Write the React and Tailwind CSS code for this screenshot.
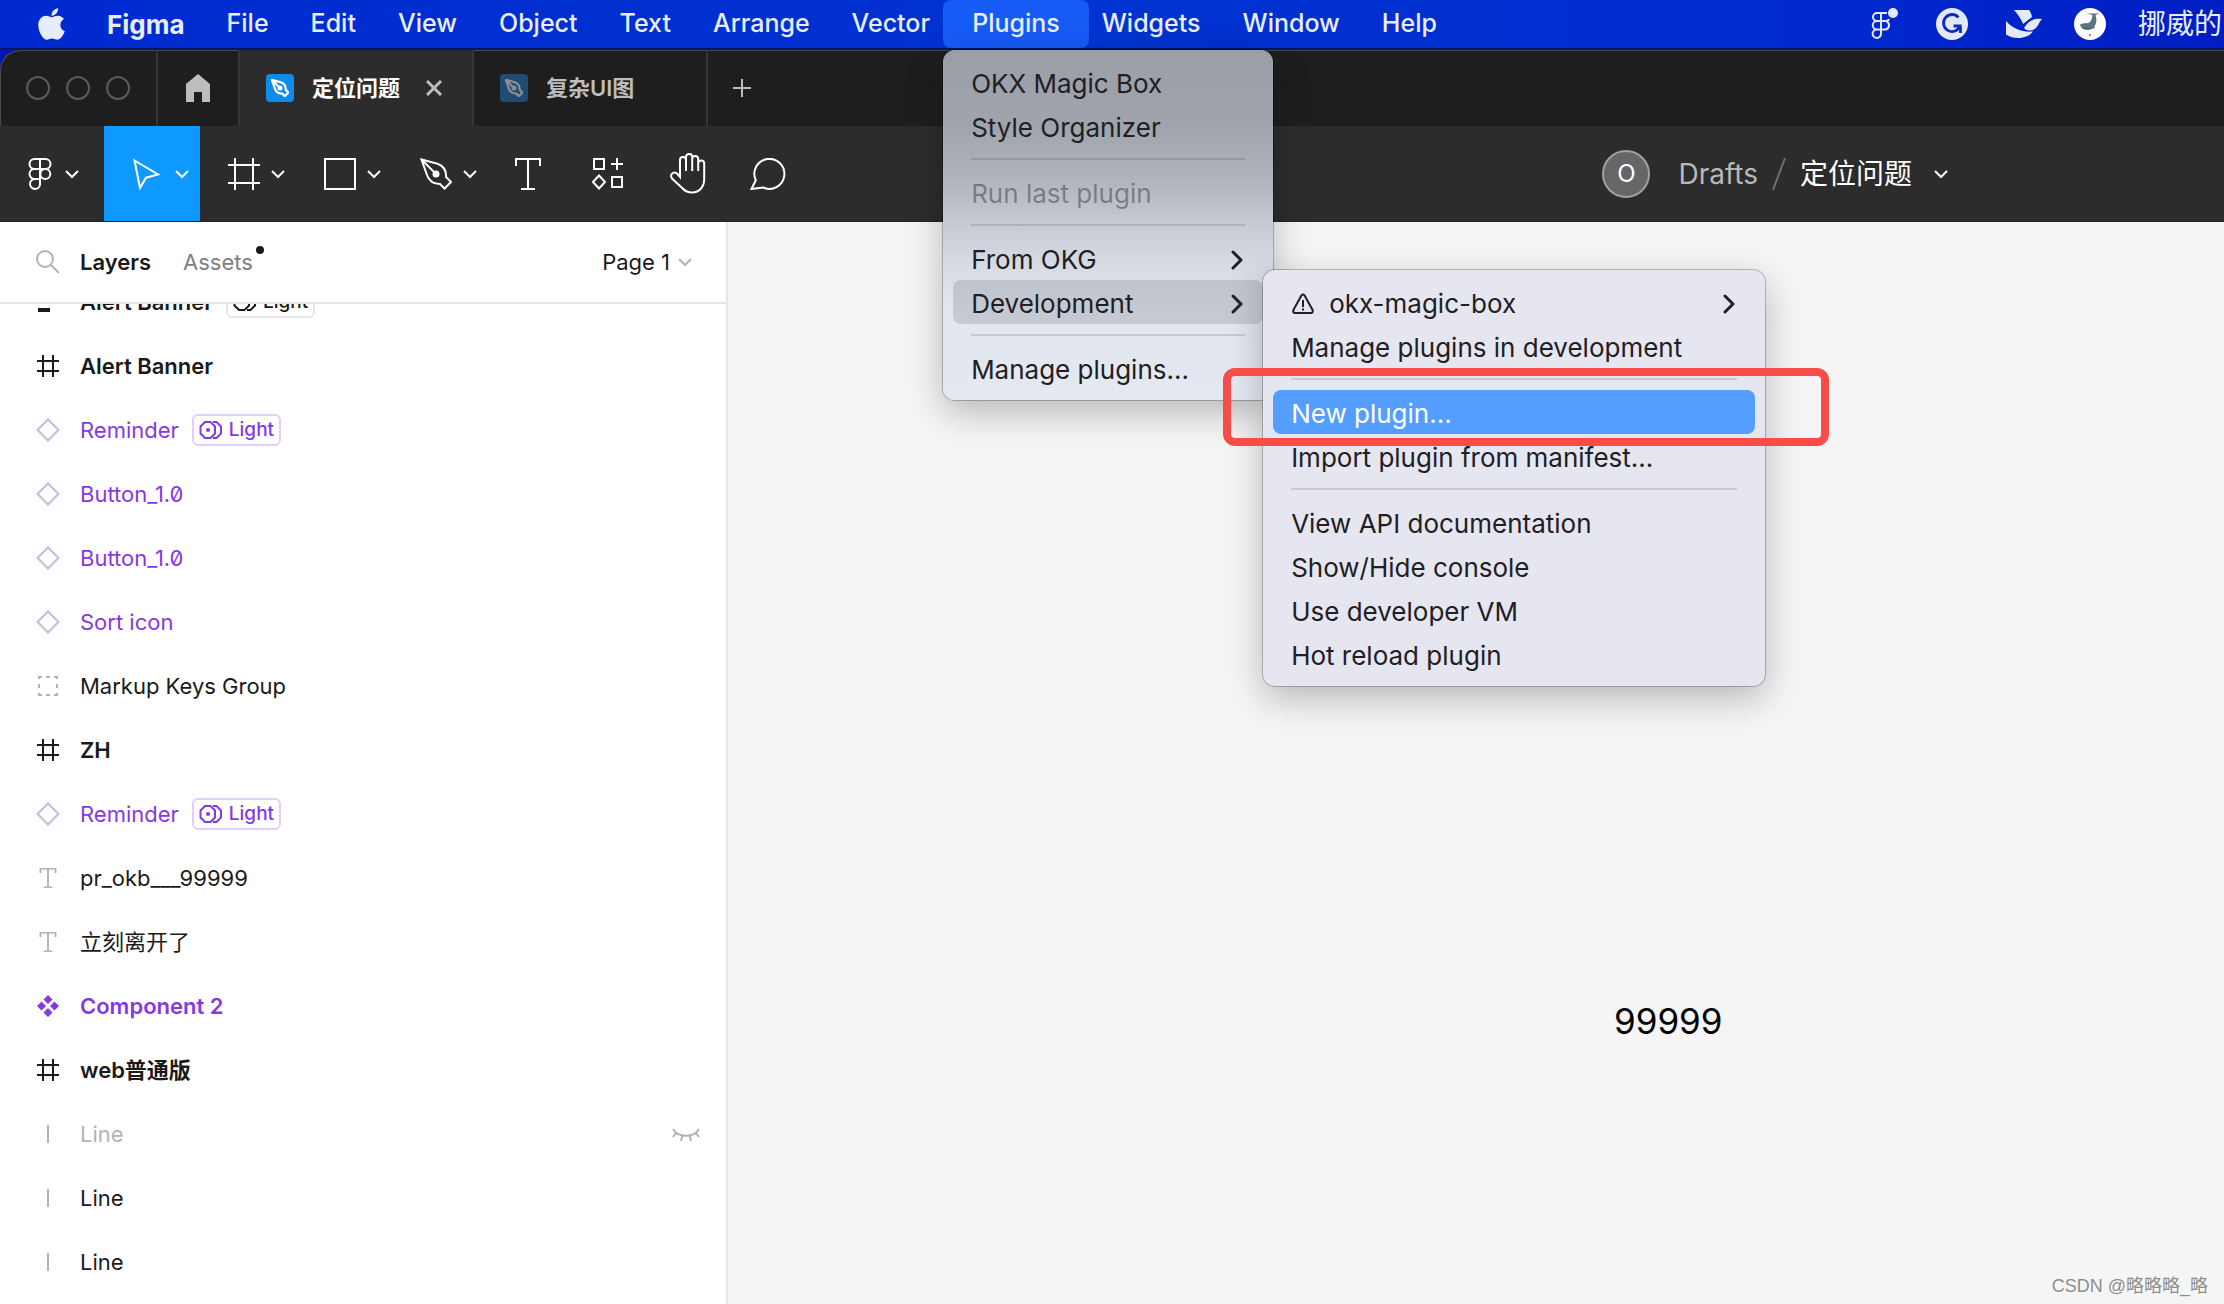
import { FaApple } from "react-icons/fa";

const menusBefore = [
  "File",
  "Edit",
  "View",
  "Object",
  "Text",
  "Arrange",
  "Vector",
];

const menusAfter = ["Widgets", "Window", "Help"];

const layers = [
  { icon: "scroll", name: "Alert Banner", bold: true, tag: "Light" },
  { icon: "frame", name: "Alert Banner", bold: true },
  { icon: "instance", name: "Reminder", purple: true, tag: "Light" },
  { icon: "instance", name: "Button_1.0", purple: true },
  { icon: "instance", name: "Button_1.0", purple: true },
  { icon: "instance", name: "Sort icon", purple: true },
  { icon: "group", name: "Markup Keys Group" },
  { icon: "frame", name: "ZH", bold: true },
  { icon: "instance", name: "Reminder", purple: true, tag: "Light" },
  { icon: "text", name: "pr_okb___99999" },
  { icon: "text", name: "立刻离开了" },
  { icon: "component", name: "Component 2", bold: true, purple: true },
  { icon: "frame", name: "web普通版", bold: true },
  { icon: "line", name: "Line", hidden: true },
  { icon: "line", name: "Line" },
  { icon: "line", name: "Line" },
];

/* ---------- icons ---------- */

function Chevron({ className = "text-white" }) {
  return (
    <svg
      viewBox="0 0 14 10"
      className={`w-[14px] h-[10px] shrink-0 ${className}`}
      fill="none"
      stroke="currentColor"
      strokeWidth="2"
    >
      <path d="M1 2l6 6 6-6" />
    </svg>
  );
}

function MenuChevron() {
  return (
    <svg
      viewBox="0 0 14 20"
      className="w-[14px] h-5 ml-auto"
      fill="none"
      stroke="currentColor"
      strokeWidth="3"
      strokeLinecap="round"
      strokeLinejoin="round"
    >
      <path d="M2 2l8 8-8 8" />
    </svg>
  );
}

function FigmaIcon() {
  return (
    <svg
      viewBox="0 0 24 32"
      className="w-6 h-8"
      fill="none"
      stroke="currentColor"
      strokeWidth="2"
    >
      <path d="M12 1H6.500a5 5 0 0 0 0 10H17.500a5 5 0 0 0 0-10H12v25.500a5 5 0 1 1-5.500-5.500H12" />
      <path d="M12 11H6.500a5 5 0 0 0 0 10" />
      <circle cx="17.300" cy="16" r="5" />
    </svg>
  );
}

function MoveIcon() {
  return (
    <svg
      viewBox="0 0 32 32"
      className="w-8 h-8"
      fill="none"
      stroke="currentColor"
      strokeWidth="2"
    >
      <path d="M2.500 2.500L26 16.500l-12 3.200L8 30z" />
    </svg>
  );
}

function FrameIcon() {
  return (
    <svg
      viewBox="0 0 32 32"
      className="w-8 h-8"
      fill="none"
      stroke="currentColor"
      strokeWidth="2"
    >
      <path d="M7 0v32M25 0v32M0 7h32M0 25h32" />
    </svg>
  );
}

function RectIcon() {
  return (
    <svg
      viewBox="0 0 32 32"
      className="w-8 h-8"
      fill="none"
      stroke="currentColor"
      strokeWidth="2"
    >
      <rect x="1" y="1" width="30" height="30" />
    </svg>
  );
}

function PenIcon({ className = "w-8 h-8", width = 2 }) {
  return (
    <svg
      viewBox="0 0 32 32"
      className={className}
      fill="none"
      stroke="currentColor"
      strokeWidth={width}
    >
      <path d="M1.500 1.500l16 4.200c6 2.300 9 7 8.600 13.300l4.900 5-6.500 6.500-4.500-4.500C13.500 26 9 23 7 17z" />
      <path d="M1.500 1.500L16 16" />
      <circle cx="16" cy="16" r="2.500" fill="currentColor" />
    </svg>
  );
}

function TextIcon({ className = "w-8 h-8", width = 2 }) {
  return (
    <svg
      viewBox="0 0 32 32"
      className={className}
      fill="none"
      stroke="currentColor"
      strokeWidth={width}
    >
      <path d="M4 8V1h24v7M16 1v30M9 31h14" />
    </svg>
  );
}

function ResourcesIcon() {
  return (
    <svg
      viewBox="0 0 32 32"
      className="w-8 h-8"
      fill="none"
      stroke="currentColor"
      strokeWidth="2"
    >
      <rect x="2" y="1" width="10" height="10" />
      <rect x="20" y="19" width="10" height="10" />
      <path d="M25 0v12M19 6h12M7 17.500L13 24l-6 6.500L1 24z" />
    </svg>
  );
}

function HandIcon() {
  return (
    <svg
      viewBox="0 0 36 41"
      className="w-9 h-[41px]"
      fill="none"
      stroke="currentColor"
      strokeWidth="2"
    >
      <path d="M10 24V7a3 3 0 0 1 6 0v11V4a3.100 3.100 0 0 1 6.200 0v14V6a3 3 0 0 1 6 0v12V10.500a3 3 0 0 1 6 0V26c0 8-5 13.500-12 13.500-4 0-7-1.200-9.500-4L2 25.500C-.500 22 3 17.500 7 20.500z" />
    </svg>
  );
}

function CommentIcon() {
  return (
    <svg
      viewBox="0 0 36 32"
      className="w-9 h-8"
      fill="none"
      stroke="currentColor"
      strokeWidth="2"
    >
      <path d="M5.800 22.300A15 15 0 1 1 13 29.500L1.500 31z" />
    </svg>
  );
}

function LayerIcon({ type }) {
  if (type === "scroll") {
    return (
      <svg viewBox="0 0 24 24" className="w-6 h-6" fill="currentColor">
        <path d="M2 4h12v4H2zM2 18h12v4H2z" />
      </svg>
    );
  }

  if (type === "frame") {
    return (
      <svg
        viewBox="0 0 24 24"
        className="w-6 h-6"
        stroke="currentColor"
        strokeWidth="2"
      >
        <path d="M7 1v22M17 1v22M1 7h22M1 17h22" />
      </svg>
    );
  }

  if (type === "text") {
    return (
      <TextIcon
        className="w-6 h-5 text-[#b3b3b3]"
        width={3}
      />
    );
  }

  if (type === "instance") {
    return (
      <svg
        viewBox="0 0 24 24"
        className="w-6 h-6 text-[#cbb5e3]"
        fill="none"
        stroke="currentColor"
        strokeWidth="2"
      >
        <path d="M12 1.500L22.500 12 12 22.500 1.500 12z" />
      </svg>
    );
  }

  if (type === "component") {
    return (
      <svg viewBox="0 0 24 24" className="w-6 h-6" fill="currentColor">
        <path d="M12 1l4.500 4.500L12 10 7.500 5.500zM12 14l4.500 4.500L12 23l-4.500-4.500zM5.500 7.500L10 12l-4.500 4.500L1 12zM18.500 7.500L23 12l-4.500 4.500L14 12z" />
      </svg>
    );
  }

  if (type === "group") {
    return (
      <svg
        viewBox="0 0 24 24"
        className="w-6 h-6 text-[#b3b3b3]"
        fill="none"
        stroke="currentColor"
        strokeWidth="2"
      >
        <path d="M3 5V3h3M10 3h4M18 3h3v2M21 10v4M21 19v2h-3M14 21h-4M6 21H3v-2M3 14v-4" />
      </svg>
    );
  }

  return (
    <svg
      viewBox="0 0 24 24"
      className="w-6 h-6 text-[#b3b3b3]"
      stroke="currentColor"
      strokeWidth="2"
    >
      <path d="M12 3v18" />
    </svg>
  );
}

function HiddenIcon() {
  return (
    <svg
      viewBox="0 0 28 18"
      className="w-7 h-[18px] text-[#b3b3b3]"
      fill="none"
      stroke="currentColor"
      strokeWidth="2"
    >
      <path d="M1 4c5 9 21 9 26 0M4.500 7.500L1 12M23.500 7.500L27 12M10.500 10.500L9 16M17.500 10.500L19 16" />
    </svg>
  );
}

function VariantIcon() {
  return (
    <svg
      viewBox="0 0 24 20"
      className="w-6 h-5"
      fill="none"
      stroke="currentColor"
      strokeWidth="2"
    >
      <path d="M6 2h5.500L16 6.500v7L11.500 18H6l-4.500-4.500v-7z" />
      <path d="M14 2h3.500L22 6.500v7L17.500 18H14" />
      <circle cx="9" cy="10" r="2" fill="currentColor" stroke="none" />
    </svg>
  );
}

function StatusIcons() {
  return (
    <div className="flex items-center gap-8 text-[#e4e9f8]">
      <svg
        viewBox="0 0 34 32"
        className="w-[34px] h-8"
        fill="none"
        stroke="currentColor"
        strokeWidth="2"
      >
        <path d="M17 5H7a4 4 0 0 0 0 8h9a4.500 4.500 0 0 1 0 8.500H7a4 4 0 0 1 0-8.500M11 5v20.500a4.200 4.200 0 1 1-4-4M16 13h1a4 4 0 0 0 2-2" />
        <circle cx="23" cy="5" r="5" fill="currentColor" stroke="none" />
      </svg>

      <svg viewBox="0 0 32 32" className="w-8 h-8">
        <circle cx="16" cy="16" r="16" fill="currentColor" />
        <path
          d="M22.500 9.500A8.500 8.500 0 1 0 24 18h-6.500M24.500 18.500V25"
          fill="none"
          stroke="#0b2bc8"
          strokeWidth="2.800"
        />
      </svg>

      <svg
        viewBox="0 0 42 32"
        className="w-[42px] h-8"
        fill="currentColor"
      >
        <path d="M14 2h15c1.500 2 2.500 4 3 7l-9 7c-2-5-5-10-9-14z" />
        <path d="M24 20c4-7 9-10 18-9-4 4-4 11-12 11.500-2 0-4.500-.500-6-2.500z" />
        <path d="M6 13c7 8 17 11.500 27 10.500-5 7-18 9-27 3z" />
      </svg>

      <svg viewBox="0 0 32 32" className="w-8 h-8">
        <circle cx="16" cy="16" r="16" fill="#fff" />
        <path
          d="M6 16.500c4-2 8-.500 10-2.500s2-5 2.500-7l-6-1.500h13L21.500 7C23 12 23 17 18.500 20c-5 3-11.500 2-12.500-3.500z"
          fill="#5b7581"
        />
        <path
          d="M9 20c4 2 9 1 12-1"
          fill="none"
          stroke="#3b4c56"
          strokeWidth="1"
        />
        <circle cx="16" cy="27" r="1" fill="#5b7581" />
      </svg>
    </div>
  );
}

/* ---------- menus ---------- */

function MenuItem({ children, active, disabled, arrow }) {
  return (
    <button
      type="button"
      disabled={disabled}
      className={`flex items-center w-full h-11 px-[18px] pt-[3px] rounded-lg text-[26px] text-left whitespace-nowrap ${
        active === "gray" ? "bg-black/12" : ""
      } ${active === "blue" ? "bg-[#549eff] text-white" : ""} ${
        disabled ? "text-black/35" : ""
      }`}
    >
      {children}
      {arrow && <MenuChevron />}
    </button>
  );
}

function MenuDivider() {
  return <hr className="mx-[18px] my-[10px] border-0 h-[2px] bg-black/12" />;
}

function DevelopmentMenu() {
  return (
    <div className="absolute left-full -top-[10px] z-10 w-[502px] p-[10px] rounded-xl bg-[#e6e6f0] shadow-[0_0_0_1px_rgba(0,0,0,0.22),0_12px_36px_rgba(0,0,0,0.26)]">
      <MenuItem arrow>
        <svg
          viewBox="0 0 24 24"
          className="w-6 h-6 mr-[14px]"
          fill="none"
          stroke="currentColor"
          strokeWidth="2"
          strokeLinejoin="round"
        >
          <path d="M12 2.500c.700 0 1.200.400 1.600 1l8 14.500c.600 1.300 0 3-1.600 3H4c-1.600 0-2.200-1.700-1.600-3l8-14.500c.400-.600.900-1 1.600-1zM12 8v7M12 16.500v2" />
        </svg>
        okx-magic-box
      </MenuItem>
      <MenuItem>Manage plugins in development</MenuItem>
      <MenuDivider />
      <div className="relative">
        <MenuItem active="blue">New plugin...</MenuItem>
        <div className="absolute -left-[50px] -right-[74px] -top-[22px] -bottom-3 z-10 border-8 border-[#f74c48] rounded-xl pointer-events-none" />
      </div>
      <MenuItem>Import plugin from manifest...</MenuItem>
      <MenuDivider />
      <MenuItem>View API documentation</MenuItem>
      <MenuItem>Show/Hide console</MenuItem>
      <MenuItem>Use developer VM</MenuItem>
      <MenuItem>Hot reload plugin</MenuItem>
    </div>
  );
}

function PluginsMenu() {
  return (
    <div className="absolute left-0 top-[50px] z-20 w-[330px] p-[10px] rounded-xl text-[#1f2023] bg-[linear-gradient(to_bottom,#9a9ea6_0%,#a0a4ac_22%,#b0b4bd_37%,#c6cad3_50%,#d5dae3_61%,#e1e6ef_74%,#e4e9f1_100%)] shadow-[0_0_0_1px_rgba(0,0,0,0.22),0_12px_36px_rgba(0,0,0,0.26)]">
      <MenuItem>OKX Magic Box</MenuItem>
      <MenuItem>Style Organizer</MenuItem>
      <MenuDivider />
      <MenuItem disabled>Run last plugin</MenuItem>
      <MenuDivider />
      <MenuItem arrow>From OKG</MenuItem>
      <div className="relative">
        <MenuItem active="gray" arrow>
          Development
        </MenuItem>
        <DevelopmentMenu />
      </div>
      <MenuDivider />
      <MenuItem>Manage plugins...</MenuItem>
    </div>
  );
}

function MenuBar() {
  return (
    <header className="flex items-center h-[50px] shrink-0 pr-[2px] border-b-2 border-[#04165e] bg-[linear-gradient(to_right,#002ad0,#0033d0_50%,#002bd0_80%,#001dc4)] text-[25px] text-[#e8edfb]">
      <button type="button" className="pl-[38px] pr-[21px]" aria-label="Apple">
        <FaApple className="w-[27px] h-9" />
      </button>
      <nav className="flex h-full items-center">
        <button type="button" className="px-[21px] text-[26px] font-bold">
          Figma
        </button>
        {menusBefore.map((name) => (
          <button type="button" key={name} className="px-[21px] font-medium">
            {name}
          </button>
        ))}
        <div className="relative h-full -mx-2">
          <button
            type="button"
            className="h-full px-[29px] rounded-lg bg-[#165bf5] font-medium"
          >
            Plugins
          </button>
          <PluginsMenu />
        </div>
        {menusAfter.map((name) => (
          <button type="button" key={name} className="px-[21px] font-medium">
            {name}
          </button>
        ))}
      </nav>
      <div className="flex items-center gap-8 ml-auto">
        <StatusIcons />
        <span className="text-[28px] leading-8 whitespace-nowrap">挪威的</span>
      </div>
    </header>
  );
}

/* ---------- window ---------- */

function TabBar() {
  return (
    <div className="flex h-[76px] shrink-0 text-[22px]">
      <div className="flex items-center gap-4 w-[158px] pl-[26px] border-r-2 border-[#363636]">
        <span className="w-6 h-6 rounded-full border-2 border-[#5a5a5a]" />
        <span className="w-6 h-6 rounded-full border-2 border-[#5a5a5a]" />
        <span className="w-6 h-6 rounded-full border-2 border-[#5a5a5a]" />
      </div>
      <button
        type="button"
        aria-label="Home"
        className="flex items-center justify-center w-[82px] border-r-2 border-[#363636] text-[#bdbdbd]"
      >
        <svg viewBox="0 0 24 28" className="w-6 h-7" fill="currentColor">
          <path d="M12 0l12 10v18h-8V18H8v10H0V10z" />
        </svg>
      </button>
      <div className="flex items-center w-[234px] pl-[26px] pr-[30px] border-r-2 border-[#363636] bg-[#2c2c2c] text-white">
        <span className="flex items-center justify-center w-7 h-7 rounded bg-[#0d8ce9]">
          <PenIcon className="w-[18px] h-[18px]" width={4} />
        </span>
        <span className="ml-[18px] font-bold">定位问题</span>
        <button
          type="button"
          aria-label="Close tab"
          className="ml-auto text-[#bdbdbd]"
        >
          <svg
            viewBox="0 0 16 16"
            className="w-4 h-4"
            stroke="currentColor"
            strokeWidth="3"
          >
            <path d="M1 1l14 14M15 1L1 15" />
          </svg>
        </button>
      </div>
      <div className="flex items-center w-[234px] pl-[26px] border-r-2 border-[#363636] text-[#bdbdbd]">
        <span className="flex items-center justify-center w-7 h-7 rounded bg-[#204b73] text-[#8a8f94]">
          <PenIcon className="w-[18px] h-[18px]" width={4} />
        </span>
        <span className="ml-[18px] font-semibold">复杂UI图</span>
      </div>
      <button
        type="button"
        aria-label="New tab"
        className="flex items-center justify-center w-[68px] text-[#bdbdbd]"
      >
        <svg
          viewBox="0 0 18 18"
          className="w-[18px] h-[18px]"
          stroke="currentColor"
          strokeWidth="2"
        >
          <path d="M9 0v18M0 9h18" />
        </svg>
      </button>
    </div>
  );
}

function Tool({ children, label, active }) {
  return (
    <button
      type="button"
      aria-label={label}
      className={`flex items-center h-full w-24 pl-7 gap-[11px] ${
        active ? "bg-[#0d99ff]" : ""
      }`}
    >
      {children}
      <Chevron />
    </button>
  );
}

function PlainTool({ children, label }) {
  return (
    <button
      type="button"
      aria-label={label}
      className="flex items-center justify-center h-full w-20"
    >
      {children}
    </button>
  );
}

function Toolbar() {
  return (
    <div className="flex items-center h-24 shrink-0 border-b border-[#222] bg-[#2c2c2c] text-white">
      <button
        type="button"
        aria-label="Main menu"
        className="flex items-center h-full w-[104px] pl-7 gap-[13px]"
      >
        <FigmaIcon />
        <Chevron />
      </button>
      <Tool label="Move" active>
        <MoveIcon />
      </Tool>
      <Tool label="Frame">
        <FrameIcon />
      </Tool>
      <Tool label="Rectangle">
        <RectIcon />
      </Tool>
      <Tool label="Pen">
        <PenIcon />
      </Tool>
      <PlainTool label="Text">
        <TextIcon />
      </PlainTool>
      <PlainTool label="Resources">
        <ResourcesIcon />
      </PlainTool>
      <PlainTool label="Hand">
        <HandIcon />
      </PlainTool>
      <PlainTool label="Comment">
        <CommentIcon />
      </PlainTool>

      <div className="flex items-center ml-auto mr-[276px] text-[28px]">
        <span className="flex items-center justify-center w-12 h-12 rounded-full border-2 border-[#a0a0a0] bg-[#666] text-2xl">
          O
        </span>
        <a href="#drafts" className="ml-7 text-[#b8b8b8]">
          Drafts
        </a>
        <svg
          viewBox="0 0 14 32"
          className="w-[14px] h-8 mx-[14px] text-[#6e6e6e]"
          stroke="currentColor"
          strokeWidth="2"
        >
          <path d="M13 0L1 32" />
        </svg>
        <button type="button" className="flex items-center gap-[22px]">
          定位问题
          <Chevron />
        </button>
      </div>
    </div>
  );
}

function LayerRow({ layer }) {
  const color = layer.purple
    ? "text-[#8638e5]"
    : layer.hidden
    ? "text-[#b3b3b3]"
    : "text-[#1a1a1a]";

  return (
    <li className={`flex items-center h-16 pl-9 pr-[26px] ${color}`}>
      <LayerIcon type={layer.icon} />
      <span className={`ml-5 ${layer.bold ? "font-semibold" : ""}`}>
        {layer.name}
      </span>
      {layer.tag && (
        <span
          className={`flex items-center gap-[6px] h-8 ml-[13px] px-[5px] border-2 rounded-md text-[19px] font-medium ${
            layer.purple ? "border-[#e4ccff]" : "border-[#e6e6e6]"
          }`}
        >
          <VariantIcon />
          {layer.tag}
        </span>
      )}
      {layer.hidden && (
        <span className="ml-auto">
          <HiddenIcon />
        </span>
      )}
    </li>
  );
}

function LayersPanel() {
  return (
    <aside className="flex flex-col w-[728px] shrink-0 border-r-2 border-[#e6e6e6] bg-white text-[22px] text-[#1a1a1a]">
      <div className="flex items-center h-[82px] shrink-0 pl-9 pr-[34px] border-b-2 border-[#e6e6e6]">
        <svg
          viewBox="0 0 24 24"
          className="w-6 h-6 text-[#b3b3b3]"
          fill="none"
          stroke="currentColor"
          strokeWidth="2"
        >
          <circle cx="9" cy="9" r="8" />
          <path d="M15 15l8 8" />
        </svg>
        <button type="button" className="ml-5 font-semibold">
          Layers
        </button>
        <button type="button" className="relative ml-8 text-[#808080]">
          Assets
          <span className="absolute left-full top-0 w-2 h-2 ml-[3px] rounded-full bg-[#1a1a1a]" />
        </button>
        <button type="button" className="flex items-center gap-2 ml-auto">
          Page 1
          <Chevron className="text-[#b3b3b3]" />
        </button>
      </div>
      <div className="flex-1 min-h-0 overflow-hidden">
        <ul className="-mt-[34px] [font-feature-settings:'zero']">
          {layers.map((layer, index) => (
            <LayerRow key={index} layer={layer} />
          ))}
        </ul>
      </div>
    </aside>
  );
}

function Canvas() {
  return (
    <main className="relative flex-1 bg-[#f5f5f5]">
      <p className="absolute left-[886px] top-[777px] text-[35px] leading-[44px] text-black">
        99999
      </p>
      <p className="absolute right-4 bottom-1 text-[18px] leading-7 text-[#8c8c8c] [text-shadow:1px_1px_0_#fff] font-['Liberation_Sans','Noto_Sans_CJK_SC',sans-serif]">
        CSDN @略略略_略
      </p>
    </main>
  );
}

function App() {
  return (
    <div className="flex flex-col h-screen overflow-hidden bg-[#0016b8] font-['Inter','Noto_Sans_CJK_SC',sans-serif]">
      <MenuBar />
      <div className="flex flex-col flex-1 min-h-0 overflow-hidden rounded-tl-[20px] bg-[#1e1e1e] shadow-[inset_1px_1px_0_#484848]">
        <TabBar />
        <Toolbar />
        <div className="flex flex-1 min-h-0">
          <LayersPanel />
          <Canvas />
        </div>
      </div>
    </div>
  );
}

export default App;
